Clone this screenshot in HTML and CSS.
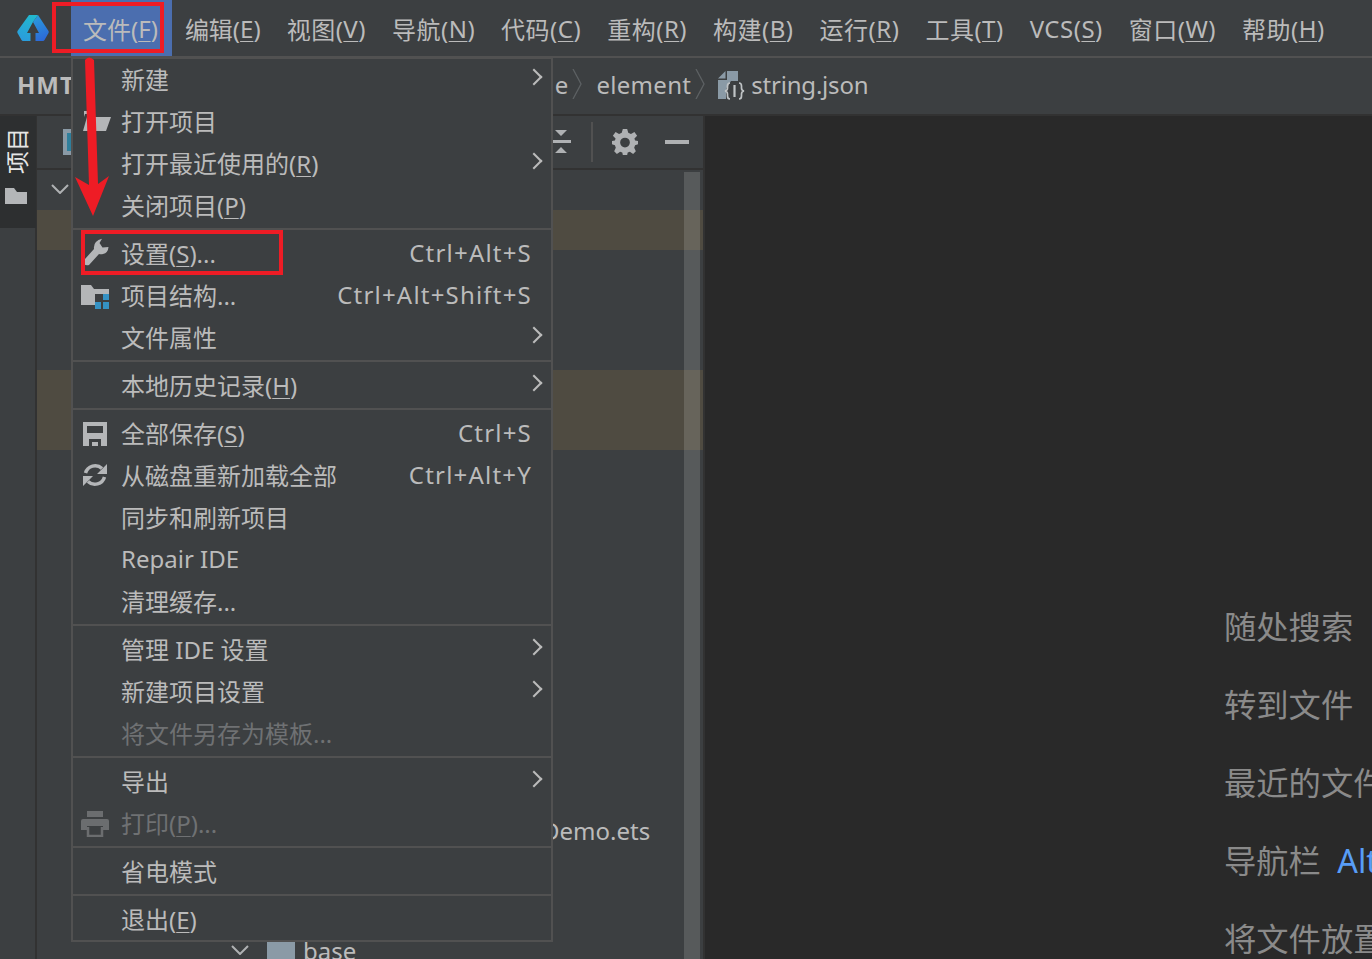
FILE: index.html
```html
<!DOCTYPE html>
<html lang="zh-CN">
<head>
    <meta charset="UTF-8">
    <title>DevEco Studio</title>
    <link rel="stylesheet" href="styles.css">
</head>
<body>
    <div class="menubar">
        <svg class="logo" viewBox="0 0 32 26" width="32" height="26">
            <defs>
                <linearGradient id="logo-left" x1="0.600" y1="0" x2="0.300" y2="1">
                    <stop offset="0" stop-color="#22b8cf"/>
                    <stop offset="1" stop-color="#2a9bdc"/>
                </linearGradient>
                <linearGradient id="logo-right" x1="0.300" y1="0" x2="0.600" y2="1">
                    <stop offset="0" stop-color="#2a9bdc"/>
                    <stop offset="1" stop-color="#2c68d8"/>
                </linearGradient>
            </defs>
            <path fill="url(#logo-left)" d="M12 0 H21 L16 7 L10 18 H13.500 V26 H6 Q5 26 4.500 25 L0.500 18 Q0 17 0.500 16 Z"/>
            <path fill="url(#logo-right)" d="M21 0 L31.500 16 Q32 17 31.500 18 L27.500 25 Q27 26 26 26 H18.500 V18 H22 L16 7 Z"/>
        </svg>
        <span class="menu-gap"></span>
        <span class="menu-title active">文件(<u>F</u>)</span>
        <span class="menu-title">编辑(<u>E</u>)</span>
        <span class="menu-title wide">视图(<u>V</u>)</span>
        <span class="menu-title wide">导航(<u>N</u>)</span>
        <span class="menu-title wide">代码(<u>C</u>)</span>
        <span class="menu-title wide">重构(<u>R</u>)</span>
        <span class="menu-title wide">构建(<u>B</u>)</span>
        <span class="menu-title wide">运行(<u>R</u>)</span>
        <span class="menu-title wide">工具(<u>T</u>)</span>
        <span class="menu-title wide">VCS(<u>S</u>)</span>
        <span class="menu-title wide">窗口(<u>W</u>)</span>
        <span class="menu-title wide">帮助(<u>H</u>)</span>
    </div>

    <div class="breadcrumb">
        <b class="crumb-root">HMT</b>
        <span class="crumb-rest">
            <span>e</span>
            <svg class="crumb-sep" viewBox="0 0 10 30" width="10" height="30"><path d="M1 0 L9 15 L1 30" fill="none" stroke="#5d6163" stroke-width="1.300"/></svg>
            <span class="crumb-dir">element</span>
            <svg class="crumb-sep" viewBox="0 0 10 30" width="10" height="30"><path d="M1 0 L9 15 L1 30" fill="none" stroke="#5d6163" stroke-width="1.300"/></svg>
            <svg class="json-icon" viewBox="0 0 27 29" width="27" height="29">
                <path fill="#8a9aa6" d="M9 0 H20 V10 H13 L8 18 V28 H0 V9 H9 Z"/>
                <path fill="#8a9aa6" d="M0 7.500 L7.500 0 V7.500 Z"/>
                <path fill="none" stroke="#bfc3c5" stroke-width="1.700" d="M12 12 Q9.500 12 9.500 15 V17 Q9.500 19.500 7 20 Q9.500 20.500 9.500 23 V25 Q9.500 28 12 28 M21 12 Q23.500 12 23.500 15 V17 Q23.500 19.500 26 20 Q23.500 20.500 23.500 23 V25 Q23.500 28 21 28"/>
                <path stroke="#bfc3c5" stroke-width="2.200" d="M16.500 14 V26"/>
            </svg>
            <span class="crumb-file">string.json</span>
        </span>
    </div>

    <div class="workspace">
        <div class="stripe">
            <div class="stripe-tab">
                <span class="stripe-label">项目</span>
                <svg class="stripe-folder" viewBox="0 0 22 16" width="22" height="16"><path fill="#b4b6b8" d="M0 0 H9 L12 4 H22 V16 H0 Z"/></svg>
            </div>
        </div>

        <div class="project">
            <div class="project-tools">
                <span class="module-icon"></span>
                <svg class="tool-collapse" viewBox="0 0 20 24" width="20" height="24">
                    <path fill="#afb1b3" d="M4 0 H16 L10 6 Z M0 10 H20 V13 H0 Z M10 17 L16 23 H4 Z"/>
                </svg>
                <span class="tool-divider"></span>
                <svg class="tool-gear" viewBox="0 0 24 24" width="26" height="26">
                    <path fill="#afb1b3" fill-rule="evenodd" d="M10 0 H14 L15 3.500 L17.500 4.600 L20.700 2.800 L23.200 6.200 L20.700 8.800 L21.300 10.500 L24 11 V14 L21.300 15 L20.500 17.200 L22 20.500 L19.500 23 L16.500 21 L14.500 21.800 L14 24 H10 L9.500 21.800 L7.500 21 L4.500 23 L2 20.500 L3.500 17.200 L2.700 15 L0 14 V11 L2.700 10.500 L3.300 8.800 L0.800 6.200 L3.300 2.800 L6.500 4.600 L9 3.500 Z M12 8 A4.500 4.500 0 1 0 12 17 A4.500 4.500 0 1 0 12 8 Z"/>
                </svg>
                <span class="tool-minus"></span>
            </div>
            <div class="tree">
                <div class="tree-row"><svg class="tree-chevron" viewBox="0 0 18 10" width="18" height="10"><path d="M1 1 L9 9 L17 1" fill="none" stroke="#afb1b3" stroke-width="2"/></svg></div>
                <div class="tree-row changed"></div>
                <div class="tree-row"></div>
                <div class="tree-row"></div>
                <div class="tree-row"></div>
                <div class="tree-row changed"></div>
                <div class="tree-row changed"></div>
                <div class="tree-row"></div>
                <div class="tree-row"></div>
                <div class="tree-row"></div>
                <div class="tree-row"></div>
                <div class="tree-row"></div>
                <div class="tree-row"></div>
                <div class="tree-row"></div>
                <div class="tree-row"></div>
                <div class="tree-row"></div>
                <div class="tree-row"><span class="file-name">Demo.ets</span></div>
                <div class="tree-row"></div>
                <div class="tree-row"></div>
                <div class="tree-row base-row">
                    <svg class="base-chevron" viewBox="0 0 18 10" width="18" height="10"><path d="M1 1 L9 9 L17 1" fill="none" stroke="#afb1b3" stroke-width="2"/></svg>
                    <span class="folder-box"></span>
                    <span class="base-name">base</span>
                </div>
            </div>
            <div class="scrollbar"></div>
        </div>

        <div class="editor">
            <div class="hints">
                <div class="hint">随处搜索 <span class="hint-key">Double Shift</span></div>
                <div class="hint">转到文件</div>
                <div class="hint">最近的文件</div>
                <div class="hint">导航栏 <span class="hint-key">Alt+Home</span></div>
                <div class="hint">将文件放置在此处</div>
            </div>
        </div>
    </div>

    <div class="file-menu">
        <div class="item"><span class="label">新建</span><span class="arrow"></span></div>
        <div class="item">
            <svg class="icon" viewBox="0 0 28 24" width="28" height="24"><path fill="#b4b6b8" d="M1 2 H9 L11 5 H2 L1 8 Z M4 8 H28 L23 22 H0 Z"/></svg>
            <span class="label">打开项目</span>
        </div>
        <div class="item"><span class="label">打开最近使用的(<u>R</u>)</span><span class="arrow"></span></div>
        <div class="item"><span class="label">关闭项目(<u>P</u>)</span></div>
        <div class="sep"></div>
        <div class="item">
            <svg class="icon icon-wrench" viewBox="0 0 26 28" width="26" height="28"><path fill="#b4b6b8" d="M19 0.700 L16.500 5 L19.500 9.500 L25.500 9 Q25 15 20 16 Q18 16.500 16 16 L6 27 Q3 28 1 26 Q0 24 2 21 L11 11 Q10 3 19 0.700 Z"/></svg>
            <span class="label">设置(<u>S</u>)...</span><span class="key">Ctrl+Alt+S</span>
        </div>
        <div class="item">
            <svg class="icon icon-wide icon-struct" viewBox="0 0 28 24" width="28" height="24"><path fill="#b4b6b8" d="M0 0 H10 L13 4 H28 V9 H14 V20 H0 Z"/><path fill="#3592c4" d="M22 9 H28 V15 H22 Z M14 17 H20 V24 H14 Z M22 17 H28 V24 H22 Z"/></svg>
            <span class="label">项目结构...</span><span class="key">Ctrl+Alt+Shift+S</span>
        </div>
        <div class="item"><span class="label">文件属性</span><span class="arrow"></span></div>
        <div class="sep"></div>
        <div class="item"><span class="label">本地历史记录(<u>H</u>)</span><span class="arrow"></span></div>
        <div class="sep"></div>
        <div class="item">
            <svg class="icon icon-save" viewBox="0 0 24 24" width="24" height="24"><path fill="#b4b6b8" fill-rule="evenodd" d="M0 0 H24 V24 H0 Z M4 4 V11 H20 V4 Z M6 17 V24 H18 V17 Z M9 20 H15 V24 H9 Z"/></svg>
            <span class="label">全部保存(<u>S</u>)</span><span class="key">Ctrl+S</span>
        </div>
        <div class="item">
            <svg class="icon" viewBox="0 0 24 24" width="24" height="24"><path fill="none" stroke="#b4b6b8" stroke-width="3.500" d="M2.500 10 A10 10 0 0 1 19 5.500 M21.500 14 A10 10 0 0 1 5 18.500"/><path fill="#b4b6b8" d="M24 1 V11 H14 Z M0 23 V13 H10 Z"/></svg>
            <span class="label">从磁盘重新加载全部</span><span class="key">Ctrl+Alt+Y</span>
        </div>
        <div class="item"><span class="label">同步和刷新项目</span></div>
        <div class="item"><span class="label">Repair IDE</span></div>
        <div class="item"><span class="label">清理缓存...</span></div>
        <div class="sep"></div>
        <div class="item"><span class="label">管理 IDE 设置</span><span class="arrow"></span></div>
        <div class="item"><span class="label">新建项目设置</span><span class="arrow"></span></div>
        <div class="item disabled"><span class="label">将文件另存为模板...</span></div>
        <div class="sep"></div>
        <div class="item"><span class="label">导出</span><span class="arrow"></span></div>
        <div class="item disabled">
            <svg class="icon icon-wide" viewBox="0 0 28 26" width="28" height="26"><path fill="#6b6d6f" d="M6 0 H22 V6 H6 Z M2 8 H26 Q28 8 28 10 V19 H22 V15 H6 V19 H0 V10 Q0 8 2 8 Z"/><path fill="none" stroke="#6b6d6f" stroke-width="2.500" d="M7 16 V25 H21 V16"/></svg>
            <span class="label">打印(<u>P</u>)...</span>
        </div>
        <div class="sep"></div>
        <div class="item"><span class="label">省电模式</span></div>
        <div class="sep"></div>
        <div class="item"><span class="label">退出(<u>E</u>)</span></div>
    </div>

    <div class="mark mark-menu"></div>
    <div class="mark mark-settings"></div>
    <svg class="mark-arrow" viewBox="0 0 40 160" width="40" height="160">
        <path fill="#ee1c25" d="M12 3 Q16 -2 21 3 L25 127 L36 119 L20 159 L2 120 L16 128 Z"/>
    </svg>
</body>
</html>
```

FILE: styles.css
```css
* {
    box-sizing: border-box;
}

:root {
    --bg: #3c3f41;
    --line: #515151;
    --text: #bbbbbb;
    --dim: #6f7173;
    --red: #ee1c25;
}

body {
    margin: 0;
    height: 959px;
    overflow: hidden;
    background: var(--bg);
    color: var(--text);
    font-family: "Noto Sans", "Noto Sans CJK SC", sans-serif;
    font-size: 24px;
    position: relative;
}

u {
    text-underline-offset: 3px;
    text-decoration-thickness: 1px;
}

/* top menu */
.menubar {
    height: 58px;
    display: flex;
    align-items: stretch;
    border-bottom: 2px solid var(--line);
}

.logo {
    margin: 15px 0 0 17px;
}

.menu-gap {
    width: 22px;
}

.menu-title {
    padding: 0 13px;
    display: flex;
    align-items: center;
    white-space: pre;
}

.menu-title.wide {
    letter-spacing: 0.500px;
}

.menu-title.active {
    background: #4b6eaf;
    padding: 0 14px 0 12px;
}

/* breadcrumb */
.breadcrumb {
    height: 58px;
    display: flex;
    align-items: center;
    border-bottom: 2px solid #323232;
    padding: 0 0 4px 17px;
}

.crumb-root {
    letter-spacing: 1px;
}

.crumb-rest {
    margin-left: 480px;
    display: flex;
    align-items: center;
    gap: 4px;
}

.crumb-sep {
    margin-right: 10px;
}

.crumb-sep:nth-of-type(2) {
    margin-right: 9px;
}

.crumb-dir {
    letter-spacing: 0.300px;
}

.json-icon {
    margin-top: 3px;
}

.crumb-file {
    margin-left: 2px;
    letter-spacing: -0.200px;
}

/* main area */
.workspace {
    height: 843px;
    display: flex;
}

.stripe {
    width: 37px;
    flex: none;
    border-right: 2px solid #323232;
}

.stripe-tab {
    height: 112px;
    background: #2d2f30;
    display: flex;
    flex-direction: column;
    align-items: center;
    gap: 14px;
    padding-top: 12px;
    margin-right: -1px;
}

.stripe-label {
    writing-mode: vertical-rl;
    text-orientation: sideways;
    transform: rotate(180deg);
    font-size: 23px;
    line-height: 24px;
    color: #e6e6e6;
    margin-right: 2px;
}

.stripe-folder {
    margin-right: 4px;
}

.project {
    width: 668px;
    flex: none;
    position: relative;
    overflow: hidden;
    border-right: 2px solid #323232;
}

.project-tools {
    height: 54px;
    display: flex;
    align-items: center;
    border-bottom: 2px solid #323232;
    padding: 0 14px 0 26px;
}

.module-icon {
    width: 20px;
    height: 26px;
    background: #2f7f9c;
    border: 4px solid #8a9aa6;
    margin-right: auto;
}

.tool-divider {
    width: 2px;
    height: 40px;
    background: var(--line);
    margin: 0 19px 0 20px;
}

.tool-minus {
    width: 24px;
    height: 4px;
    background: #afb1b3;
    margin-left: 27px;
}

.tree-row {
    height: 40px;
    display: flex;
    align-items: center;
}

.tree-row.changed {
    background: #4f4b41;
}

.tree-chevron {
    margin: -2px 0 0 14px;
}

.file-name {
    margin-left: 505px;
}

.base-row {
    padding-left: 194px;
}

.base-chevron {
    margin-right: 18px;
}

.folder-box {
    width: 28px;
    height: 22px;
    background: #8a9aa6;
    margin-right: 8px;
}

.scrollbar {
    position: absolute;
    top: 56px;
    right: 3px;
    width: 16px;
    bottom: 0;
    background: rgba(255, 255, 255, 0.14);
}

.editor {
    flex: 1;
    background: #292929;
    padding: 487px 0 0 519px;
    overflow: hidden;
    white-space: nowrap;
}

.hint {
    height: 78px;
    font-size: 32.300px;
    line-height: 46px;
    color: #8a8a8a;
}

.hint-key {
    color: #589df6;
    margin-left: 8px;
}

/* file menu popup */
.file-menu {
    position: absolute;
    left: 71px;
    top: 57px;
    width: 482px;
    height: 885px;
    background: var(--bg);
    border: 2px solid var(--line);
}

.item {
    height: 42px;
    position: relative;
    display: flex;
    align-items: center;
    padding: 0 19px 3px 48px;
    white-space: pre;
}

.item .label {
    flex: 1;
}

.item .key {
    letter-spacing: 1.200px;
}

.item.disabled {
    color: var(--dim);
}

.item .icon {
    position: absolute;
    left: 10px;
    top: 8px;
}

.item .icon-wide {
    left: 8px;
}

.item .icon-wrench {
    top: 5px;
}

.item .icon-struct {
    top: 10px;
}

.item .icon-save {
    top: 9px;
}

.arrow {
    position: absolute;
    right: 11px;
    top: 12px;
    width: 12px;
    height: 12px;
    border-top: 2px solid var(--text);
    border-right: 2px solid var(--text);
    transform: rotate(45deg);
}

.sep {
    height: 6px;
    padding: 1px 0 3px;
}

.sep::before {
    content: "";
    display: block;
    height: 2px;
    background: var(--line);
}

/* red annotations */
.mark {
    position: absolute;
    border: 4px solid var(--red);
}

.mark-menu {
    left: 52px;
    top: 2px;
    width: 112px;
    height: 51px;
}

.mark-settings {
    left: 81px;
    top: 230px;
    width: 202px;
    height: 45px;
}

.mark-arrow {
    position: absolute;
    left: 73px;
    top: 57px;
}
```
